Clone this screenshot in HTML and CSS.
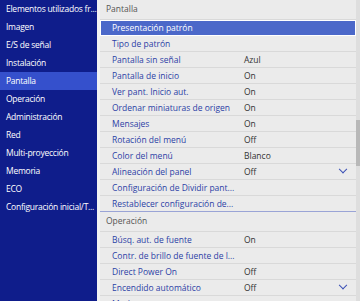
FILE: index.html
```html
<!DOCTYPE html>
<html lang="es">
<head>
  <meta charset="UTF-8">
  <title>Menú</title>
  <link rel="stylesheet" href="styles.css">
</head>
<body>
  <div class="screen">
    <ul class="side">
      <li>Elementos utilizados fr...</li>
      <li>Imagen</li>
      <li>E/S de señal</li>
      <li>Instalación</li>
      <li class="active">Pantalla</li>
      <li>Operación</li>
      <li>Administración</li>
      <li>Red</li>
      <li>Multi-proyección</li>
      <li>Memoria</li>
      <li>ECO</li>
      <li>Configuración inicial/T...</li>
    </ul>

    <div class="main">
      <div class="list">
        <div class="head">Pantalla</div>
        <div class="row sel"><span class="name">Presentación patrón</span></div>
        <div class="row"><span class="name">Tipo de patrón</span></div>
        <div class="row"><span class="name">Pantalla sin señal</span><span class="val">Azul</span></div>
        <div class="row"><span class="name">Pantalla de inicio</span><span class="val">On</span></div>
        <div class="row"><span class="name">Ver pant. Inicio aut.</span><span class="val">On</span></div>
        <div class="row"><span class="name">Ordenar miniaturas de origen</span><span class="val">On</span></div>
        <div class="row"><span class="name">Mensajes</span><span class="val">On</span></div>
        <div class="row"><span class="name">Rotación del menú</span><span class="val">Off</span></div>
        <div class="row"><span class="name">Color del menú</span><span class="val">Blanco</span></div>
        <div class="row"><span class="name">Alineación del panel</span><span class="val">Off</span><span class="chev"></span></div>
        <div class="row"><span class="name">Configuración de Dividir pant...</span></div>
        <div class="row last"><span class="name">Restablecer configuración de...</span></div>

        <div class="head">Operación</div>
        <div class="row"><span class="name">Búsq. aut. de fuente</span><span class="val">On</span></div>
        <div class="row"><span class="name">Contr. de brillo de fuente de l...</span></div>
        <div class="row"><span class="name">Direct Power On</span><span class="val">Off</span></div>
        <div class="row"><span class="name">Encendido automático</span><span class="val">Off</span><span class="chev"></span></div>
        <div class="row"><span class="name">Modo</span></div>
      </div>
      <div class="scroll"><div class="thumb"></div></div>
    </div>
  </div>
</body>
</html>
```

FILE: styles.css
```css
body {
  margin: 0;
  font-family: 'Open Sans', 'Noto Sans', sans-serif;
  font-size: 8.5px;
  background: #0f1d8b;
}

.screen {
  display: flex;
  width: 360px;
  height: 301px;
  overflow: hidden;
}

.side {
  list-style: none;
  margin: 0;
  padding: 0;
  width: 97px;
  flex: none;
  background: #0f1d8b;
  color: #fff;
  border-right: 3px solid #f3f3f3;
  letter-spacing: -0.25px;
}
.side li {
  height: 18px;
  line-height: 18px;
  padding-left: 6px;
  white-space: nowrap;
  overflow: hidden;
}
.side li.active {
  background: #3550cc;
}

.main {
  flex: 1;
  display: flex;
  background: #ebebeb;
}
.list {
  flex: 1;
  overflow: hidden;
}

.head {
  height: 19px;
  line-height: 18px;
  padding-left: 6px;
  color: #555;
  border-bottom: 1px solid #d9d9d9;
}

.row {
  display: flex;
  align-items: center;
  height: 15px;
  border-bottom: 1px solid #d9d9d9;
  color: #2b3fa6;
  white-space: nowrap;
}
.row .name {
  width: 132px;
  padding-left: 12px;
  overflow: hidden;
}
.row .val {
  color: #333;
}
.row.sel {
  background: #4b68c9;
  color: #fff;
  outline: 1px solid #fff;
  outline-offset: -1px;
}
.row.last {
  border-bottom: 1px solid #9aa4d6;
}
.chev {
  margin-left: auto;
  margin-right: 10px;
  width: 5px;
  height: 5px;
  border-right: 1px solid #3a4fb5;
  border-bottom: 1px solid #3a4fb5;
  transform: rotate(45deg) translate(-2px, -2px);
}

.scroll {
  width: 4px;
  background: #dedede;
  flex: none;
}
.thumb {
  margin-top: 120px;
  height: 46px;
  background: #b8b8b8;
}
```
